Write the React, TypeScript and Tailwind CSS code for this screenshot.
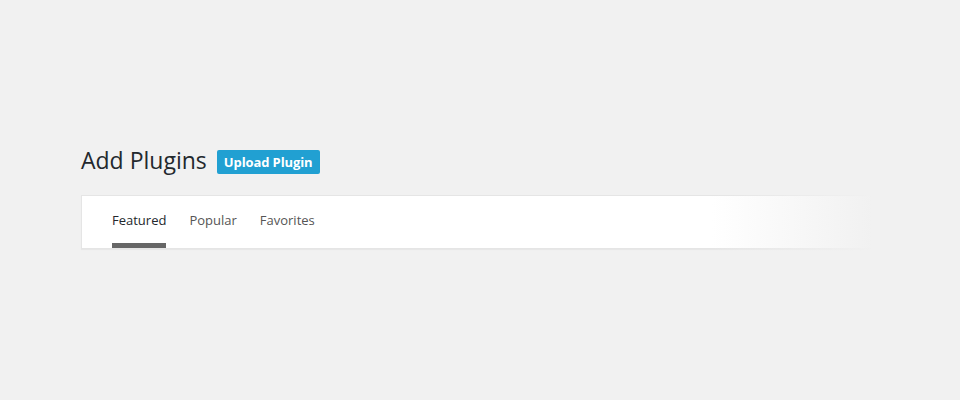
const tabs = ["Featured", "Popular", "Favorites"];

export default function App() {
  return (
    <div
      className="w-[960px] h-[400px] bg-[#f1f1f1] pl-[81px] pt-[143px] overflow-hidden"
      style={{ fontFamily: '"Open Sans", "Noto Sans", sans-serif' }}
    >
      {/* Title row */}
      <div className="flex items-center gap-[10px] h-[34px]">
        <h1 className="text-[23px] leading-[34px] font-normal text-[#23282d]">Add Plugins</h1>
        <button className="mt-[4px] h-[24px] px-[7px] rounded-[2px] bg-[#21a0d2] text-white text-[13px] font-bold leading-[24px] tracking-[-0.1px]">
          Upload Plugin
        </button>
      </div>

      {/* Filter bar */}
      <div className="relative mt-[18px] w-[790px] h-[54px] bg-white border border-[#e5e5e5] shadow-[0_1px_1px_rgba(0,0,0,0.04)] pl-[30px]">
        <div className="flex gap-[23px] h-full">
          {tabs.map((tab, i) => (
            <div
              key={tab}
              className={`flex items-center h-full pt-[2px] text-[13px] border-b-[5px] ${
                i === 0 ? "text-[#23282d] border-[#666]" : "text-[#555] border-transparent"
              }`}
            >
              {tab}
            </div>
          ))}
        </div>
        {/* Right fade */}
        <div className="absolute -top-[2px] -bottom-[3px] -right-[2px] w-[160px] bg-gradient-to-r from-[#f1f1f1]/0 to-[#f1f1f1]" />
      </div>
    </div>
  );
}
